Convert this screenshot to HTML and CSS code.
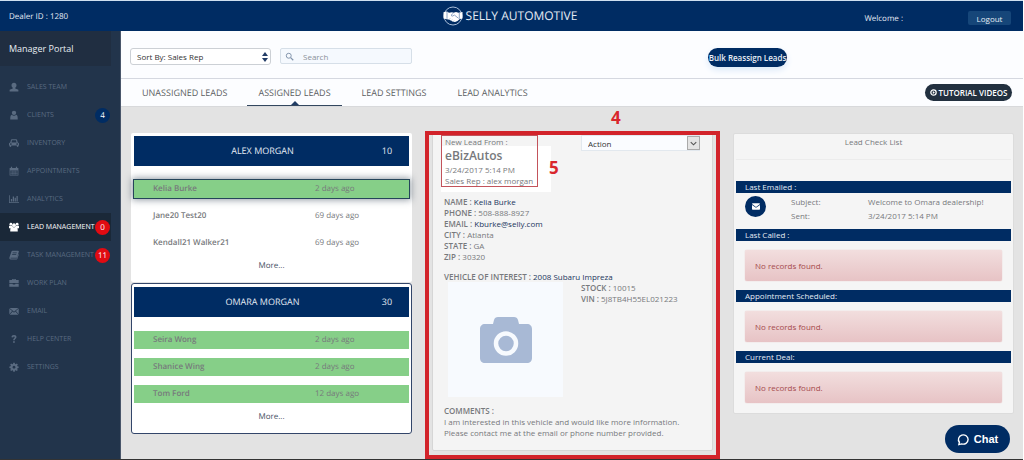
FILE: index.html
```html
<!DOCTYPE html>
<html lang="en">
<head>
<meta charset="utf-8">
<title>Selly Automotive - Lead Management</title>
<link rel="stylesheet" href="styles.css">
</head>
<body>
<div class="app">
  <header class="topbar">
    <span class="dealer">Dealer ID : 1280</span>
    <div class="brand">
      <svg class="logo" viewBox="0 0 20 20" aria-hidden="true"><circle cx="10" cy="10" r="9" fill="none" stroke="#a9bdd8" stroke-width="1"/><path fill="#fff" d="M.5 6.200 4 5.500l2 1.300 3-.6 1.500.5L13 6l2.500.8L19.500 6v6.500l-2.700.6-2.300 2-2.500 1-2.500-.6-3-1.800L4 13.200l-3.500-.6z"/><path fill="none" stroke="#6f8db5" stroke-width=".8" d="M10.500 7 8 9.300l1.200.9 2.300-1.100 4 3.200M6 13.500l1-1M8 14.700l1-1M10.300 15.500l.7-.8M4 5.800v7M16.300 6.800v6"/></svg>
      <span>SELLY AUTOMOTIVE</span>
    </div>
    <div class="account"><span>Welcome :</span><button class="logout" type="button">Logout</button></div>
  </header>
  <div class="body">
    <aside class="sidebar">
      <h2 class="portal">Manager Portal</h2>
      <nav class="nav">
        <a href="#"><svg viewBox="0 0 16 16"><path d="M8 1c2.400 0 4 1.600 4 4 0 1.800-.8 3.300-2 4v1.500l5 2V15H1v-2.500l5-2V9C4.800 8.300 4 6.800 4 5c0-2.400 1.600-4 4-4z"/></svg>SALES TEAM</a>
        <a href="#"><svg viewBox="0 0 16 16"><circle cx="8" cy="4.500" r="3.500"/><path d="M4.500 7.500C2.500 8 2 10 2 15h12c0-5-.5-7-2.500-7.500-2 2-5 2-7 0z"/></svg>CLIENTS<b class="badge navy">4</b></a>
        <a href="#"><svg viewBox="0 0 16 16"><path fill-rule="evenodd" d="M4.500 2h7c.8 0 1.200.4 1.400 1.100L14 7c1.200.2 2 1 2 2v3h-1v1.500c0 1-2.500 1-2.500 0V12h-9v1.500c0 1-2.500 1-2.500 0V12H0V9c0-1 .8-1.800 2-2l1.100-3.900C3.300 2.400 3.700 2 4.500 2zM4.800 3.500 4 7h8l-.8-3.500zM3 8.500a1.200 1.200 0 1 0 .01 0zm10 0a1.200 1.200 0 1 0 .01 0z"/></svg>INVENTORY</a>
        <a href="#"><svg viewBox="0 0 16 16"><path fill-rule="evenodd" d="M1 3h2V1h2v2h6V1h2v2h2v12H1zm1 4v7h12V7z"/><path d="M4.500 7h1v7h-1zM7.500 7h1v7h-1zM10.500 7h1v7h-1zM2 9h12v1H2zM2 11.500h12v1H2z"/></svg>APPOINTMENTS</a>
        <a href="#"><svg viewBox="0 0 16 16"><path d="M0 2h1.200v11H16v1.200H0zM3 8h2v4H3zM6 4h2v8H6zM9 6h2v6H9zM12 3h2v9h-2z"/></svg>ANALYTICS</a>
        <a href="#" class="active"><svg viewBox="0 0 16 16"><circle cx="3" cy="3.500" r="2.200"/><circle cx="13" cy="3.500" r="2.200"/><circle cx="8" cy="5" r="3"/><path d="M0 6h5l1.500 2.500h3L11 6h5v4h-2.500c.4 1 .5 3 .5 5H2c0-2 .1-4 .5-5H0z"/></svg>LEAD MANAGEMENT<b class="badge">0</b></a>
        <a href="#"><svg viewBox="0 0 16 16"><path fill-rule="evenodd" d="M5.500 1h9c1 0 1.500.6 1.200 1.600L13 11.500c-.2.700-.8 1-1.500 1H3c-.8 0-.8 1 0 1h9.500l2.500-7 .8.500-2.600 7.300c-.2.500-.5.700-1 .7H2.500C1 15 .2 13.600.7 12L4 2.200C4.200 1.400 4.700 1 5.500 1zM6 4l-.3 1h6.500l.3-1zM5.200 6.500l-.3 1h6.500l.3-1z"/></svg>TASK MANAGEMENT<b class="badge">11</b></a>
        <a href="#"><svg viewBox="0 0 16 16"><path fill-rule="evenodd" d="M5 3V1.500h6V3h4.500v5h-15V3zm1.200-.4V3h3.600v-.4zM.5 9H6v1.500h4V9h5.500v5H.5z"/></svg>WORK PLAN</a>
        <a href="#"><svg viewBox="0 0 16 16"><path d="M1 3h14L8 9zM.5 4 5 8 .5 13zM15.500 4 11 8l4.500 5zM6 8.800 8 10.600l2-1.800 5 5.200H1z"/></svg>EMAIL</a>
        <a href="#"><svg viewBox="0 0 16 16"><path d="M4 5.200C4 2.800 5.500 1.500 8 1.500s4 1.300 4 3.400c0 2.600-2.800 2.800-2.800 5H6.600c0-3 2.500-3 2.500-4.800 0-1.400-2.400-1.400-2.500.5zM6.500 11.500h2.800V14H6.500z"/></svg>HELP CENTER</a>
        <a href="#"><svg viewBox="0 0 16 16"><path fill-rule="evenodd" d="M6.800 1h2.400l.4 2 1.200.5 1.700-1.100 1.600 1.700L13 5.700l.5 1.200 1.900.3v2.200l-1.900.4-.5 1.200 1.100 1.700-1.600 1.600-1.700-1.100-1.200.5-.4 1.800H6.800l-.4-1.800-1.200-.5-1.700 1.100-1.600-1.600L3 11l-.5-1.200-1.900-.4V7.200l1.900-.3L3 5.700 1.900 4.100l1.600-1.700 1.700 1.100L6.400 3zM8 6a2.300 2.300 0 1 0 .01 0z"/></svg>SETTINGS</a>
      </nav>
    </aside>
    <main class="main">
      <div class="toolbar">
        <label class="sort"><select class="sort-select" aria-label="Sort leads"><option>Sort By: Sales Rep</option></select><svg viewBox="0 0 8 12"><path fill="#223c66" d="M4 1l3 4H1zM4 11l3-4H1z"/></svg></label>
        <label class="search"><svg viewBox="0 0 12 12"><circle cx="5" cy="5" r="3.300" fill="none" stroke="#8193ab" stroke-width="1.300"/><path d="M7.500 7.500 11 11" stroke="#8193ab" stroke-width="1.600"/></svg><input type="search" placeholder="Search" aria-label="Search"></label>
        <button class="bulk" type="button">Bulk Reassign Leads</button>
      </div>
      <div class="tabs">
        <a href="#">UNASSIGNED LEADS</a>
        <a href="#" class="current">ASSIGNED LEADS</a>
        <a href="#">LEAD SETTINGS</a>
        <a href="#">LEAD ANALYTICS</a>
        <button class="tutorial" type="button"><svg viewBox="0 0 10 10"><circle cx="5" cy="5" r="3.800" fill="none" stroke="#fff" stroke-width="1.800"/><path fill="#fff" d="M4 3l3 2-3 2z"/></svg>TUTORIAL VIDEOS</button>
      </div>
      <div class="columns">
        <section class="reps">
          <article class="rep">
            <h3><span>ALEX MORGAN</span><span>10</span></h3>
            <ul>
              <li class="fresh selected"><b>Kelia Burke</b><span>2 days ago</span></li>
              <li><b>Jane20 Test20</b><span>69 days ago</span></li>
              <li><b>Kendall21 Walker21</b><span>69 days ago</span></li>
            </ul>
            <a class="more" href="#">More...</a>
          </article>
          <article class="rep outlined">
            <h3><span>OMARA MORGAN</span><span>30</span></h3>
            <ul>
              <li class="fresh"><b>Seira Wong</b><span>2 days ago</span></li>
              <li class="fresh"><b>Shanice Wing</b><span>2 days ago</span></li>
              <li class="fresh"><b>Tom Ford</b><span>12 days ago</span></li>
            </ul>
            <a class="more" href="#">More...</a>
          </article>
        </section>
        <section class="lead">
          <span class="mark mark-four">4</span>
          <div class="lead-card">
            <div class="lead-top">
              <div class="source">
                <p>New Lead From :</p>
                <h3>eBizAutos</h3>
                <p>3/24/2017 5:14 PM</p>
                <p>Sales Rep : alex morgan</p>
                <span class="mark mark-five">5</span>
              </div>
              <label class="action"><select aria-label="Action"><option>Action</option></select><svg viewBox="0 0 12 12"><path d="M3 5l3 3 3-3" fill="none" stroke="#555" stroke-width="1.200"/></svg></label>
            </div>
            <div class="facts">
              <p><b>NAME :</b> <a href="#">Kelia Burke</a></p>
              <p><b>PHONE :</b> 508-888-8927</p>
              <p><b>EMAIL :</b> <a href="#">Kburke@selly.com</a></p>
              <p><b>CITY :</b> Atlanta</p>
              <p><b>STATE :</b> GA</p>
              <p><b>ZIP :</b> 30320</p>
            </div>
            <p class="interest"><b>VEHICLE OF INTEREST :</b> <a href="#">2008 Subaru Impreza</a></p>
            <div class="vehicle">
              <div class="photo"><svg viewBox="0 0 52 46"><path fill="#a8b9d5" d="M18 0h16c2 0 3.500 1 4 3l1 4h8c3 0 5 2 5 5v29c0 3-2 5-5 5H5c-3 0-5-2-5-5V12c0-3 2-5 5-5h8l1-4c.5-2 2-3 4-3z"/><circle cx="26" cy="26.500" r="10" fill="#a8b9d5" stroke="#f7fafe" stroke-width="4.500"/></svg></div>
              <div class="codes"><p><b>STOCK :</b> 10015</p><p><b>VIN :</b> 5J8TB4H55EL021223</p></div>
            </div>
            <div class="comments"><p><b>COMMENTS :</b></p><p>I am interested in this vehicle and would like more information.</p><p>Please contact me at the email or phone number provided.</p></div>
          </div>
        </section>
        <section class="checklist">
          <h3>Lead Check List</h3>
          <h4>Last Emailed :</h4>
          <div class="mail">
            <span class="mail-icon"><svg viewBox="0 0 10 8"><path fill="#fff" d="M1 0h8q1 0 1 1L5 4.500 0 1q0-1 1-1zM0 2.200l5 3.500 5-3.500V7q0 1-1 1H1Q0 8 0 7z"/></svg></span>
            <dl><dt>Subject:</dt><dd>Welcome to Omara dealership!</dd><dt>Sent:</dt><dd>3/24/2017 5:14 PM</dd></dl>
          </div>
          <h4>Last Called :</h4>
          <p class="empty">No records found.</p>
          <h4>Appointment Scheduled:</h4>
          <p class="empty">No records found.</p>
          <h4>Current Deal:</h4>
          <p class="empty">No records found.</p>
        </section>
      </div>
    </main>
  </div>
</div>
<button class="chat" type="button"><svg viewBox="0 0 14 14"><path fill="none" stroke="#fff" stroke-width="1.500" d="M2 12.500 2.600 10A5.200 5 0 1 1 5 11.700z"/></svg>Chat</button>
</body>
</html>
```

FILE: styles.css
```css
* { box-sizing: border-box; }
body { margin: 0; background: #fff; font: 8px/11px "Open Sans", "Noto Sans", sans-serif; color: #77797c; }
h2, h3, h4, p, ul, dl, dd { margin: 0; padding: 0; font-size: inherit; font-weight: 400; }
a { color: inherit; text-decoration: none; }
button, input, select { font: inherit; color: inherit; margin: 0; border: 0; appearance: none; }
svg { display: block; flex: none; }

.app { display: flex; flex-direction: column; min-height: 100vh; margin-right: 1px; border-top: 1px solid #cfe0f0; border-bottom: 1px solid #333; }
.topbar { display: grid; grid-template-columns: 1fr auto 1fr; align-items: center; height: 30px; padding: 0 12px 0 9px; background: #002c63; color: #e4ebf4; text-rendering: geometricPrecision; }
.brand { display: flex; align-items: center; gap: 3px; font-size: 12px; line-height: 18px; }
.logo { width: 20px; height: 20px; }
.account { display: flex; align-items: center; justify-content: flex-end; gap: 65px; padding-top: 4px; }
.logout { width: 43px; height: 14px; padding: 0; border-radius: 2px; background: #164679; }

.body { display: flex; flex: 1; }
.sidebar { width: 121px; flex: none; background: #22344b; border-right: 1px solid #49566a; }
.portal { width: 111px; margin-bottom: 7px; padding: 0 9px; background: #202e41; color: #e8edf2; font-size: 9px; line-height: 35px; }
.nav { font-size: 7px; text-rendering: geometricPrecision; }
.nav a { display: flex; align-items: center; gap: 8px; width: 111px; height: 28px; padding-left: 9px; color: #5a6b81; position: relative; white-space: nowrap; }
.nav svg { width: 10px; height: 10px; fill: currentColor; }
.nav .active { background: #1a2838; color: #fff; }
.badge { position: absolute; right: 1px; width: 15px; height: 15px; border-radius: 50%; background: #e10b12; color: #fff; font-size: 8px; font-weight: 400; line-height: 15px; text-align: center; }
.badge.navy { background: #002c63; }

.main { flex: 1; display: flex; flex-direction: column; min-width: 0; background: #fcfdff; }
.toolbar { display: flex; align-items: flex-start; height: 48px; padding: 17px 0 0 9px; border-bottom: 1px solid #d5d8e0; text-rendering: geometricPrecision; }
.sort, .search, .action { display: flex; align-items: center; position: relative; }
.sort-select { width: 141px; height: 17px; padding: 0 6px; border: 1px solid #ccd0d5; border-radius: 3px; background: #fff; color: #333; }
.sort svg { position: absolute; right: 2px; width: 8px; height: 12px; }
.search { width: 132px; height: 16px; margin-left: 9px; padding-left: 4px; gap: 9px; border: 1px solid #d6dfe8; border-radius: 2px; background: #f5f9fe; }
.search svg { width: 9px; height: 9px; }
.search input { flex: 1; min-width: 0; padding: 0; background: none; outline: 0; }
.search input::placeholder { color: #8a9099; opacity: 1; }
.bulk { width: 79px; height: 19px; margin-left: 296px; padding: 0; border-radius: 10px; background: #002c63; color: #e8eef6; font-size: 8px; font-weight: 600; white-space: nowrap; box-shadow: 0 3px 6px #dbe9f8; }
.tabs { display: flex; align-items: stretch; height: 28px; padding-right: 11px; border-bottom: 1px solid #d8d9db; font-size: 9px; line-height: 27px; color: #5c5f63; text-rendering: geometricPrecision; }
.tabs a { padding: 0 11px; margin-left: 9px; position: relative; white-space: nowrap; }
.tabs a:first-child { margin-left: 10px; }
.tabs .current { border-bottom: 1px solid #33475f; }
.tabs .current::after { content: ""; position: absolute; left: 50%; bottom: 0; margin-left: -4px; border: 4px solid transparent; border-top: 0; border-bottom-color: #203c64; }
.tutorial { display: flex; align-items: center; justify-content: center; gap: 2px; width: 87px; height: 17px; margin: auto 0 auto auto; padding: 0; border-radius: 9px; background: #22303f; color: #fff; font-size: 8px; font-weight: 600; white-space: nowrap; }
.tutorial svg { width: 7px; height: 7px; }

.columns { flex: 1; display: grid; grid-template-columns: repeat(3, minmax(0, 1fr)); gap: 20px; align-items: start; padding: 26px 9px 8px 10px; background: #e3e3e3; }
.reps { display: grid; gap: 1px; text-rendering: geometricPrecision; }
.rep { padding: 3px; background: #fff; border-radius: 2px; }
.rep.outlined { padding: 3px 2px; border: 1px solid #33466a; border-radius: 3px; }
.rep h3 { display: grid; grid-template-columns: 1fr 28px; padding-right: 8px; padding-left: 18px; background: #002c63; color: #e4ebf4; font-size: 9px; line-height: 30px; text-align: center; margin-bottom: 14px; }
.rep ul { display: grid; gap: 9px; list-style: none; }
.rep li { display: grid; grid-template-columns: 162px 1fr; padding-left: 19px; line-height: 18px; }
.rep b { font-weight: 600; }
.fresh { background: #86cf88; }
.selected { outline: 1px solid #25455a; box-shadow: 0 0 7px 2px #33445588; }
.more { display: block; line-height: 27px; text-align: center; color: #44505f; }

.lead { position: relative; }
.lead::after { content: ""; position: absolute; inset: -2px -7px -8px; border: 4px solid #d2232a; pointer-events: none; }
.mark { position: absolute; color: #d9262c; font-size: 17px; line-height: 17px; font-weight: 700; }
.mark-four { left: 179px; top: -24px; }
.mark-five { left: 107px; top: 23px; }
.lead-card { padding: 1px 12px 12px 8px; background: #f4f4f4; border: 1px solid #d6d6d6; border-radius: 2px; }
.lead-top { display: flex; justify-content: space-between; align-items: flex-start; margin-bottom: 9px; }
.source { position: relative; width: 97px; height: 52px; padding: 0 3px; border: 1px solid #c3535b; white-space: nowrap; background: linear-gradient(#f4f4f4 10px, #fff 10px); box-shadow: 0 5px 0 #fff; }
.source::before { content: ""; position: absolute; top: 10px; right: -14px; bottom: -6px; width: 13px; background: #fff; }
.source h3 { font-size: 12px; line-height: 17px; font-weight: 600; }
.action select { width: 119px; height: 16px; padding: 0 6px; background: #fafcff; color: #333; border: 1px solid #e2e8ee; }
.action svg { position: absolute; right: 0; width: 13px; height: 14px; background: #e4e4e4; border: 1px solid #aaa; }
.facts, .interest, .comments { padding-left: 3px; }
.lead-card b { font-weight: 600; }
.lead-card a { color: #22355c; }
.interest { margin-top: 9px; }
.vehicle { display: flex; gap: 18px; padding-left: 7px; }
.photo { display: grid; place-items: center; width: 115px; height: 115px; background: #f7fafe; }
.photo svg { width: 52px; height: 46px; }
.comments { margin-top: 8px; }

.checklist { padding: 1px 2px; background: #f5f5f5; border: 1px solid #dcdcdc; border-radius: 2px; }
.checklist h3 { height: 25px; margin-bottom: 21px; border-bottom: 1px solid #ececec; line-height: 14px; text-align: center; }
.checklist h4 { padding-left: 9px; background: #002c63; color: #e4ebf4; line-height: 12px; }
.mail { display: flex; gap: 25px; height: 36px; padding: 3px 9px; }
.mail-icon { display: grid; place-items: center; width: 21px; height: 21px; border-radius: 50%; background: #002c63; }
.mail-icon svg { width: 8px; height: 7px; }
.mail dl { display: grid; grid-template-columns: 77px 1fr; grid-auto-rows: 14px; line-height: 12px; white-space: nowrap; }
.empty { margin: 9px; padding: 0 10px; border-radius: 2px; background: linear-gradient(#f2dede, #e7c3c5); color: #a54a4c; line-height: 31px; box-shadow: 0 0 1px #dca7a7; }

.chat { position: fixed; right: 14px; bottom: 7px; display: flex; align-items: center; justify-content: center; gap: 4px; width: 65px; height: 28px; padding: 0; border-radius: 14px; background: #002c63; color: #fff; font: 700 11px/14px "Liberation Sans", Arial, sans-serif; }
.chat svg { width: 13px; height: 13px; }
```
